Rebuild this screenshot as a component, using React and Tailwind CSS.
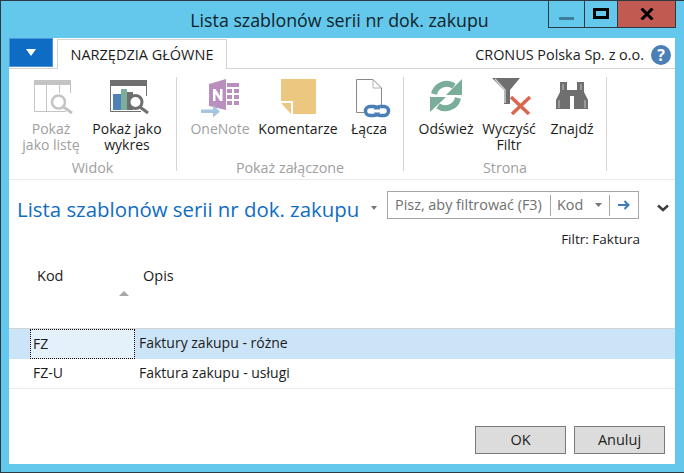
import React from "react";

const Btn = ({ w, vb, label, disabled, children }) => (
  <div className={`flex flex-col items-center ${w}`}>
    <svg width={vb[2]} height="41" viewBox={`${vb[0]} 78 ${vb[2]} 41`} className="block shrink-0">{children}</svg>
    <div className={`mt-[2px] text-center text-[14px] leading-[16px] whitespace-pre-line ${disabled ? "text-[#a0a0a0]" : "text-[#1c1c1c]"}`}>{label}</div>
  </div>
);

const Group = ({ w, pl, label, children }) => (
  <div className={`flex flex-col h-[94px] border-r border-[#d4d4d4] ${w}`}>
    <div className={`flex ${pl} h-[75px] shrink-0 pt-px`}>{children}</div>
    <div className="text-center text-[14.3px] leading-[16px] text-[#a0a0a0] mt-[8px]">{label}</div>
  </div>
);

export default function App() {
  return (
    <div className="w-[684px] h-[473px] flex flex-col bg-[#63c8ec] border border-[#2e3a42] border-r-0 overflow-hidden font-['Open_Sans','Noto_Sans',sans-serif]">
      {/* title bar */}
      <div className="flex h-[37px] shrink-0 items-start">
        <div className="flex-1 pl-[130px] pt-[7px] text-center text-[17.8px] leading-[24px] text-[#0f1f28]">Lista szablonów serii nr dok. zakupu</div>
        <div className="flex h-[27px] w-[128px] mr-[8px] border border-t-0 border-[#2e3a42]">
          <div className="w-[36px] flex items-start justify-center border-r border-[#2e3a42] pt-[16px]"><div className="w-[15px] h-[3px] bg-[#3e7f99]" /></div>
          <div className="w-[33px] flex items-start justify-center border-r border-[#2e3a42] pt-[7px]"><div className="w-[16px] h-[11px] border-[3px] border-black" /></div>
          <div className="flex-1 bg-[#c15a50] flex items-center justify-center">
            <svg width="14" height="12" viewBox="0 0 14 12"><path d="M1.5 0.5 L12.5 11.5 M12.5 0.5 L1.5 11.5" stroke="#000" strokeWidth="3" /></svg>
          </div>
        </div>
      </div>

      {/* client */}
      <div className="ml-[8px] mr-[9px] h-[426px] bg-white flex flex-col">
        {/* tab row */}
        <div className="flex h-[31px] shrink-0 items-end border-b border-[#d4d4d4] pr-[4px]">
          <div className="w-[44px] h-[29px] mb-px mr-[4px] bg-[#0f6cc4] border border-[#4d95d8] flex items-center justify-center">
            <svg width="10" height="7" viewBox="0 0 10 7"><path d="M0 0H10L5 7Z" fill="#fff" /></svg>
          </div>
          <div className="w-[170px] h-[30px] -mb-px bg-white border border-b-0 border-[#d4d4d4] flex items-center justify-center text-[14.5px] text-[#1c1c1c] whitespace-nowrap">NARZĘDZIA GŁÓWNE</div>
          <div className="flex-1" />
          <div className="text-[14.4px] leading-[20px] text-[#1c1c1c] mb-[3px] mr-[7px] whitespace-nowrap">CRONUS Polska Sp. z o.o.</div>
          <div className="w-[20px] h-[20px] rounded-full bg-[#4a7fb8] text-white text-[16px] leading-[20px] font-bold text-center mb-[3px]">?</div>
        </div>

        {/* ribbon */}
        <div className="flex h-[111px] shrink-0 pt-[8px] border-b border-[#ebebeb]">
          <Group w="w-[168px]" pl="pl-[4px]" label="Widok">
            <Btn w="w-[76px]" vb={[13, 78, 76]} disabled label={"Pokaż\njako listę"}>
              <rect x="34" y="80" width="37" height="5" fill="#c4c4c4" />
              <path d="M34.5 85V111.5H66M46.5 85V111M59.5 85V93M70.5 85V93" stroke="#c4c4c4" fill="none" />
              <circle cx="58.5" cy="102" r="6.5" fill="#fff" stroke="#c4c4c4" strokeWidth="2.5" />
              <path d="M63.5 107L72 113" stroke="#c4c4c4" strokeWidth="3" />
            </Btn>
            <Btn w="w-[76px]" vb={[89, 78, 76]} label={"Pokaż jako\nwykres"}>
              <rect x="110" y="80" width="37" height="6" fill="#6f6f6f" />
              <path d="M110.5 86V111.5H141M146.5 86V96" stroke="#6f6f6f" fill="none" />
              <rect x="113" y="94" width="8" height="16" fill="#4f81b8" />
              <rect x="121" y="89" width="6" height="21" fill="#7cae9c" />
              <rect x="127" y="92" width="6" height="18" fill="#6f6f6f" />
              <circle cx="135.5" cy="102" r="6.5" fill="#fff" stroke="#6f6f6f" strokeWidth="3" />
              <path d="M140 107L148 113" stroke="#6f6f6f" strokeWidth="3" />
            </Btn>
          </Group>
          <Group w="w-[227px]" pl="pl-[4px]" label="Pokaż załączone">
            <Btn w="w-[78px]" vb={[181, 78, 78]} disabled label="OneNote">
              <path d="M209 84L226 79V110L209 106Z" fill="#b98fbd" />
              <rect x="227" y="83" width="12" height="4" fill="#b98fbd" />
              <path d="M227 89H232V93H227ZM234 89H239V93H234ZM227 95H232V99H227ZM234 95H239V99H234ZM227 101H232V105H227ZM234 101H239V105H234Z" fill="#b98fbd" />
              <path d="M213 89V101H215.5V94L220 101H222.5V89H220V96L215.5 89Z" fill="#fff" />
              <path d="M201 109.5H213V105L220 111.5L213 117.5V113H201Z" fill="#a5c5e2" />
            </Btn>
            <Btn w="w-[78px]" vb={[259, 78, 78]} label="Komentarze">
              <path d="M281 79H316V114H293V101H281Z" fill="#ecc77f" />
              <path d="M281 103H291V114Z" fill="#ecc77f" />
            </Btn>
            <Btn w="w-[64px]" vb={[337, 78, 64]} label="Łącza">
              <path d="M356.5 79.5H373L381.5 88V105M364 112.5H356.5V79.5" fill="none" stroke="#8a8a8a" />
              <path d="M373 80V88H381" fill="none" stroke="#b5b5b5" strokeWidth="1" />
              <rect x="365.5" y="106.5" width="13" height="9" rx="4.5" fill="none" stroke="#4a7fb8" strokeWidth="3.5" />
              <rect x="375.5" y="106.5" width="13" height="9" rx="4.5" fill="none" stroke="#4a7fb8" strokeWidth="3.5" />
              <rect x="373" y="109.5" width="8" height="3" fill="#fff" />
            </Btn>
          </Group>
          <Group w="w-[203px]" pl="pl-[10px]" label="Strona">
            <Btn w="w-[64px]" vb={[414, 78, 64]} label="Odśwież">
              <path d="M434 94A13 13 0 0 1 454 86" fill="none" stroke="#7bad9b" strokeWidth="6" />
              <path d="M462 79V95H446Z" fill="#7bad9b" />
              <path d="M458 98A13 13 0 0 1 438 106" fill="none" stroke="#7bad9b" strokeWidth="6" />
              <path d="M430 112V97H446Z" fill="#7bad9b" />
            </Btn>
            <Btn w="w-[62px]" vb={[478, 78, 62]} label={"Wyczyść\nFiltr"}>
              <path d="M492 78H520L510 90V104H504V90Z" fill="#6f6f6f" />
              <path d="M495 79L505 90V103" fill="none" stroke="#cfcfcf" strokeWidth="1.5" />
              <path d="M511 97L529 114M530 97L512 114" stroke="#db6650" strokeWidth="3.5" />
            </Btn>
            <Btn w="w-[64px]" vb={[540, 78, 64]} label="Znajdź">
              <path d="M560 82H567V90H577V82H584V92L588 100V109H574V96H570V109H556V100L560 92Z" fill="#6f6f6f" />
              <path d="M559 100V108M585 100V108M563 84V90M581 84V90" stroke="#c8c8c8" strokeWidth="1" />
            </Btn>
          </Group>
        </div>

        {/* page title & search */}
        <div className="flex h-[40px] shrink-0 items-start pl-[8px]">
          <div className="w-[353px] mt-[15px] text-[20.4px] leading-[28px] text-[#0f6cc4] whitespace-nowrap">Lista szablonów serii nr dok. zakupu</div>
          <svg width="6" height="4" viewBox="0 0 6 4" className="mt-[26px] ml-[1px]"><path d="M0 0H6L3 4Z" fill="#777" /></svg>
          <div className="ml-[10px] mt-[11px] w-[252px] h-[28px] border border-[#a6a6a6] flex items-center text-[14.4px] text-[#707070]">
            <div className="w-[163px] pl-[7px] whitespace-nowrap border-r border-[#a6a6a6] h-[21px] leading-[20px]">Pisz, aby filtrować (F3)</div>
            <div className="w-[59px] pl-[6px] h-[21px] leading-[20px] border-r border-[#a6a6a6] flex items-center justify-between pr-[7px]">
              <span>Kod</span>
              <svg width="7" height="4" viewBox="0 0 7 4"><path d="M0 0H7L3.5 4Z" fill="#777" /></svg>
            </div>
            <div className="flex-1 flex justify-center">
              <svg width="12" height="10" viewBox="0 0 12 10"><path d="M0 5H10M6.5 1L10.5 5L6.5 9" fill="none" stroke="#3f7cbc" strokeWidth="2" /></svg>
            </div>
          </div>
          <svg width="12" height="8" viewBox="0 0 12 8" className="ml-[18px] mt-[24px]"><path d="M1 1.5L6 6L11 1.5" fill="none" stroke="#404040" strokeWidth="2.5" /></svg>
        </div>

        <div className="h-[19px] mt-[10px] shrink-0 text-right pr-[35px] text-[13.5px] leading-[19px] text-[#1c1c1c]">Filtr: Faktura</div>

        {/* column headers */}
        <div className="flex h-[80px] shrink-0 border-b border-[#d4d4d4] text-[14.5px] text-[#1c1c1c]">
          <div className="w-[126px] pl-[28px] pt-[17px] flex flex-col">
            <span className="leading-[20px]">Kod</span>
            <svg width="10" height="5" viewBox="0 0 10 5" className="ml-[82px] mt-[5px]"><path d="M0 5H10L5 0Z" fill="#a6a6a6" /></svg>
          </div>
          <div className="pl-[8px] pt-[17px] leading-[20px]">Opis</div>
        </div>

        {/* rows */}
        <div className="flex h-[30px] shrink-0 bg-[#cce4f7] text-[14px] text-[#1c1c1c] leading-[28px]">
          <div className="ml-[21px] w-[105px] bg-[#e5f1fa] border border-dotted border-black pl-[2px]">FZ</div>
          <div className="pl-[4px]">Faktury zakupu - różne</div>
        </div>
        <div className="flex h-[30px] shrink-0 border-b border-[#ebebeb] text-[14px] text-[#1c1c1c] leading-[28px]">
          <div className="ml-[21px] w-[105px] pl-[3px]">FZ-U</div>
          <div className="pl-[4px]">Faktura zakupu - usługi</div>
        </div>

        {/* footer */}
        <div className="flex justify-end gap-[8px] pr-[10px] pt-[37px] text-[14.5px] text-[#1c1c1c]">
          <div className="w-[91px] h-[28px] bg-[#dcdcdc] border border-[#7a7a7a] text-center leading-[26px]">OK</div>
          <div className="w-[91px] h-[28px] bg-[#dcdcdc] border border-[#7a7a7a] text-center leading-[26px]">Anuluj</div>
        </div>
      </div>
    </div>
  );
}
